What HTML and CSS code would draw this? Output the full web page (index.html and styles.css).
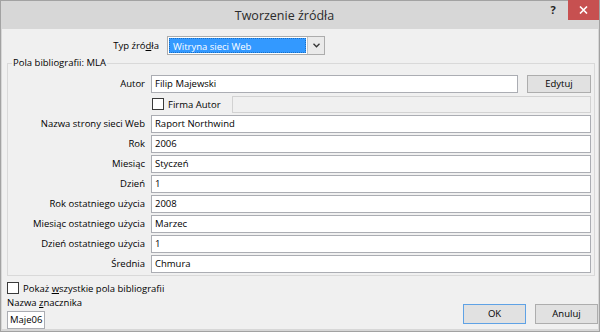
FILE: index.html
```html
<!DOCTYPE html>
<html lang="pl">
<head>
<meta charset="utf-8">
<title>Tworzenie źródła</title>
<link rel="stylesheet" href="styles.css">
</head>
<body>
<div class="window">
  <div class="titlebar">
    <div class="title">Tworzenie źródła</div>
    <div class="help">?</div>
    <div class="close">
      <svg width="9" height="8" viewBox="0 0 9 8"><path d="M1 0.5 L8 7.5 M8 0.5 L1 7.5" stroke="#fff" stroke-width="1.6" fill="none"/></svg>
    </div>
  </div>
  <div class="content">
    <div class="type-row">
      <div class="type-label">Typ źró<u>d</u>ła</div>
      <div class="select">
        <div class="sel-value">Witryna sieci Web</div>
        <div class="sel-btn">
          <svg width="7" height="5" viewBox="0 0 7 5"><path d="M0.5 0.8 L3.5 3.8 L6.5 0.8" stroke="#333" stroke-width="1.3" fill="none"/></svg>
        </div>
      </div>
    </div>
    <fieldset class="group">
      <legend>Pola bibliografii: MLA</legend>
      <div class="grid">
        <div class="lbl">Autor</div>
        <div class="with-btn">
          <div class="field">Filip Majewski</div>
          <div class="btn edit">Edytuj</div>
        </div>
        <div class="lbl"></div>
        <div class="firma">
          <span class="check"></span>
          <span class="firma-text">Firma Autor</span>
          <div class="field disabled"></div>
        </div>
        <div class="lbl">Nazwa strony sieci Web</div>
        <div class="field">Raport Northwind</div>
        <div class="lbl">Rok</div>
        <div class="field">2006</div>
        <div class="lbl">Miesiąc</div>
        <div class="field">Styczeń</div>
        <div class="lbl">Dzień</div>
        <div class="field">1</div>
        <div class="lbl">Rok ostatniego użycia</div>
        <div class="field">2008</div>
        <div class="lbl">Miesiąc ostatniego użycia</div>
        <div class="field">Marzec</div>
        <div class="lbl">Dzień ostatniego użycia</div>
        <div class="field">1</div>
        <div class="lbl">Średnia</div>
        <div class="field">Chmura</div>
      </div>
    </fieldset>
    <div class="bottom">
      <div class="left">
        <div class="check-row"><span class="check"></span><span>Pokaż <u>w</u>szystkie pola bibliografii</span></div>
        <div class="tag-label">Nazwa <u>z</u>nacznika</div>
        <div class="field tag">Maje06</div>
      </div>
      <div class="buttons">
        <div class="btn ok">OK</div>
        <div class="btn">Anuluj</div>
      </div>
    </div>
  </div>
</div>
</body>
</html>
```
FILE: styles.css
```css
html, body {
  margin: 0;
  padding: 0;
  background: #f0f0f0;
}
body {
  font-family: "Open Sans", "Noto Sans", sans-serif;
  font-size: 9.5px;
  color: #000;
}
.window {
  width: 600px;
  height: 332px;
  box-sizing: border-box;
  border: 1px solid #a2a2a2;
  background: #d7d7d7;
  display: flex;
  flex-direction: column;
}
.titlebar {
  height: 28px;
  display: flex;
  align-items: flex-start;
  flex: none;
}
.title {
  flex: 1;
  margin-right: -27px;
  text-align: center;
  line-height: 29px;
  font-size: 12.5px;
  color: #2b2b2b;
}
.help {
  position: relative;
  width: 24px;
  height: 19px;
  line-height: 17px;
  text-align: center;
  font-weight: bold;
  font-size: 11px;
  color: #222;
  margin-right: 3px;
}
.close {
  width: 31px;
  height: 20px;
  margin-top: -1px;
  background: #c75050;
  display: flex;
  align-items: center;
  justify-content: center;
}
.content {
  flex: 1;
  background: #f0f0f0;
  margin: 0 1px 2px;
  padding: 7px 1px 0 5px;
  display: flex;
  flex-direction: column;
}
.type-row {
  display: flex;
  align-items: center;
  height: 19px;
}
.type-label {
  width: 152px;
  text-align: right;
  margin-right: 8px;
}
.select {
  width: 158px;
  height: 19px;
  box-sizing: border-box;
  border: 1px solid #acacac;
  background: #fff;
  display: flex;
  padding: 1px 0 1px 1px;
}
.sel-value {
  flex: 1;
  background: #3399ff;
  color: #fff;
  padding-left: 3px;
  line-height: 15px;
  border: 1px dotted #1a6fc4;
}
.sel-btn {
  width: 16px;
  margin: -1px 0 -1px 1px;
  border-left: 1px solid #c4c4c4;
  background: #eaeaea;
  display: flex;
  align-items: center;
  justify-content: center;
}
.group {
  margin: 2px 2px 0 0;
  padding: 6px 3px 2px 4px;
  border: 1px solid #d9d9d9;
  min-width: 0;
}
.group legend {
  padding: 0 1px;
  line-height: 12px;
}
.grid {
  display: grid;
  grid-template-columns: 133px 1fr;
  grid-auto-rows: 18px;
  column-gap: 6px;
  row-gap: 2px;
}
.lbl {
  text-align: right;
  line-height: 18px;
  white-space: nowrap;
}
.field {
  box-sizing: border-box;
  height: 18px;
  border: 1px solid #abadb3;
  background: #fff;
  padding-left: 3px;
  line-height: 16px;
}
.with-btn {
  display: flex;
  gap: 9px;
}
.with-btn .field {
  flex: 1;
}
.btn {
  box-sizing: border-box;
  border: 1px solid #adadad;
  background: #e1e1e1;
  text-align: center;
}
.edit {
  width: 64px;
  height: 18px;
  line-height: 16px;
}
.firma {
  display: flex;
  align-items: center;
}
.check {
  display: inline-block;
  width: 12px;
  height: 12px;
  box-sizing: border-box;
  border: 1px solid #3a3a3a;
  background: #fff;
  flex: none;
}
.firma .check {
  margin-left: 1px;
  margin-right: 4px;
}
.firma-text {
  margin-right: 11px;
}
.field.disabled {
  flex: 1;
  height: 17px;
  background: #f0f0f0;
  border-color: #d2d2d2;
}
.bottom {
  display: flex;
  justify-content: space-between;
  align-items: flex-end;
}
.left {
  display: flex;
  flex-direction: column;
  align-items: flex-start;
}
.check-row {
  display: flex;
  align-items: center;
  gap: 4px;
  height: 12px;
  margin-top: 6px;
}
.tag-label {
  margin-top: 3px;
  line-height: 12px;
}
.field.tag {
  margin-top: 2px;
  width: 38px;
  padding-left: 2px;
}
.buttons {
  display: flex;
  gap: 9px;
  margin-bottom: 5px;
  margin-right: -1px;
}
.buttons .btn {
  width: 63px;
  height: 20px;
  line-height: 18px;
}
.buttons .ok {
  border-color: #5fa2e5;
}
```
